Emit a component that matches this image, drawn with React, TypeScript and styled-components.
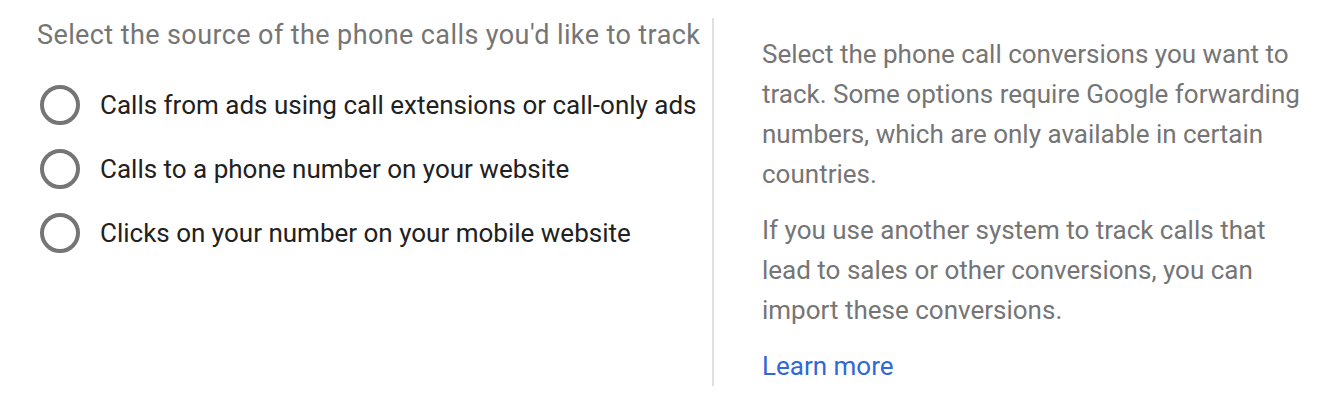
import React from "react";
import styled, { createGlobalStyle } from "styled-components";

const GlobalStyle = createGlobalStyle`
  body {
    margin: 0;
    background: #ffffff;
    font-family: Roboto, "Noto Sans", Arial, sans-serif;
  }
`;

const Page = styled.div`
  display: flex;
  align-items: flex-start;
  padding-top: 18px;
`;

const SourceColumn = styled.div`
  box-sizing: border-box;
  width: 712px;
  padding-left: 37px;
`;

const SectionTitle = styled.div`
  font-size: 27px;
  line-height: 34px;
  letter-spacing: 0.4px;
  color: #757575;
  white-space: nowrap;
`;

const OptionList = styled.div`
  display: flex;
  flex-direction: column;
  margin-top: 21px;
`;

const OptionRow = styled.label`
  display: flex;
  align-items: center;
  height: 64px;
  gap: 20px;
  cursor: pointer;
`;

const RadioCircle = styled.span<{ checked?: boolean }>`
  box-sizing: border-box;
  width: 40px;
  height: 40px;
  margin-left: 3px;
  border-radius: 50%;
  border: 4px solid ${(props) => (props.checked ? "#1a73e8" : "#757575")};
  flex-shrink: 0;
`;

const OptionText = styled.span`
  font-size: 26px;
  line-height: 32px;
  color: #212121;
  white-space: nowrap;
`;

const HelpColumn = styled.div`
  box-sizing: content-box;
  width: 545px;
  border-left: 2px solid #e0e0e0;
  padding: 16px 0 0 48px;
`;

const HelpText = styled.p`
  margin: 0 0 16px;
  font-size: 26px;
  line-height: 40px;
  color: #757575;
`;

const LearnMore = styled.a`
  display: block;
  font-size: 26px;
  line-height: 40px;
  color: #3367d6;
  text-decoration: none;
`;

const options = [
  "Calls from ads using call extensions or call-only ads",
  "Calls to a phone number on your website",
  "Clicks on your number on your mobile website",
];

const App: React.FC = () => {
  return (
    <>
      <GlobalStyle />
      <Page>
        <SourceColumn>
          <SectionTitle>Select the source of the phone calls you'd like to track</SectionTitle>
          <OptionList>
            {options.map((option) => (
              <OptionRow key={option}>
                <RadioCircle />
                <OptionText>{option}</OptionText>
              </OptionRow>
            ))}
          </OptionList>
        </SourceColumn>
        <HelpColumn>
          <HelpText>
            Select the phone call conversions you want to track. Some options require
            Google forwarding numbers, which are only available in certain countries.
          </HelpText>
          <HelpText>
            If you use another system to track calls that lead to sales or other
            conversions, you can import these conversions.
          </HelpText>
          <LearnMore href="#">Learn more</LearnMore>
        </HelpColumn>
      </Page>
    </>
  );
};

export default App;
